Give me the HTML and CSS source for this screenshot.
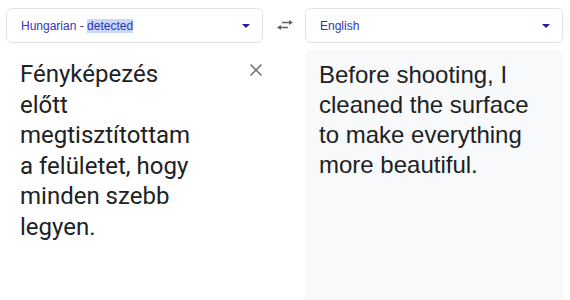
FILE: index.html
```html
<!DOCTYPE html>
<html lang="en">
<head>
    <meta charset="UTF-8">
    <meta name="viewport" content="width=device-width, initial-scale=1.0">
    <title>Translate</title>
    <link rel="stylesheet" href="styles.css">
</head>
<body>
    <div class="translator">
        <div class="lang-select">
            <span class="lang-name">Hungarian - <span class="selected">detected</span></span>
            <span class="caret"></span>
        </div>
        <button class="swap-btn" aria-label="Swap languages">
            <svg width="18" height="10" viewBox="0 0 18 10">
                <path d="M13 0l4 2.5-4 2.5V3.3H6V1.7h7z M5 5L1 7.5 5 10V8.3h7V6.7H5z" fill="#5f6368"/>
            </svg>
        </button>
        <div class="lang-select">
            <span class="lang-name">English</span>
            <span class="caret"></span>
        </div>

        <div class="source-pane">
            <p class="source-text">Fényképezés előtt megtisztítottam a felületet, hogy minden szebb legyen.</p>
            <button class="clear-btn" aria-label="Clear source text">
                <svg width="14" height="14" viewBox="0 0 14 14">
                    <path d="M1.5 1.5l11 11M12.5 1.5l-11 11" stroke="#6b6e72" stroke-width="1.5"/>
                </svg>
            </button>
        </div>
        <div></div>
        <div class="target-pane">
            <p class="target-text">Before shooting, I cleaned the surface to make everything more beautiful.</p>
        </div>
    </div>
</body>
</html>
```

FILE: styles.css
```css
body {
    margin: 0;
    background-color: #fff;
    color: #202124;
    font-family: "Liberation Sans", Arial, sans-serif;
}
.translator {
    display: grid;
    grid-template-columns: 257px 42px 258px;
    grid-template-rows: 35px 1fr;
    row-gap: 7px;
    height: 300px;
    padding: 8px 7px 0 6px;
    box-sizing: border-box;
    overflow: hidden;
}
.lang-select {
    display: flex;
    align-items: center;
    justify-content: space-between;
    border: 1px solid #e3e3e6;
    border-radius: 6px;
    padding: 1px 12px 0 14px;
}
.lang-name {
    font-size: 12px;
    color: #3434b4;
}
.selected {
    background-color: #c9d7fa;
}
.caret {
    width: 0;
    height: 0;
    border-left: 4.5px solid transparent;
    border-right: 4.5px solid transparent;
    border-top: 4.5px solid #1f1fa3;
}
.swap-btn {
    display: flex;
    align-items: center;
    justify-content: center;
    background: none;
    border: none;
    padding: 0 0 1px 1px;
}
.source-pane {
    display: flex;
    align-items: flex-start;
    padding-left: 14px;
}
.source-text {
    margin: 9px 0 0;
    width: 185px;
    font-family: Roboto, sans-serif;
    font-size: 24px;
    line-height: 30.5px;
}
.clear-btn {
    margin: 13px 0 0 auto;
    background: none;
    border: none;
    padding: 0;
    width: 14px;
    height: 14px;
}
.target-pane {
    background-color: #f8f9fa;
    border-radius: 6px 6px 0 0;
    padding: 10px 14px 0;
}
.target-text {
    margin: 0;
    font-size: 24px;
    line-height: 30px;
}
```
